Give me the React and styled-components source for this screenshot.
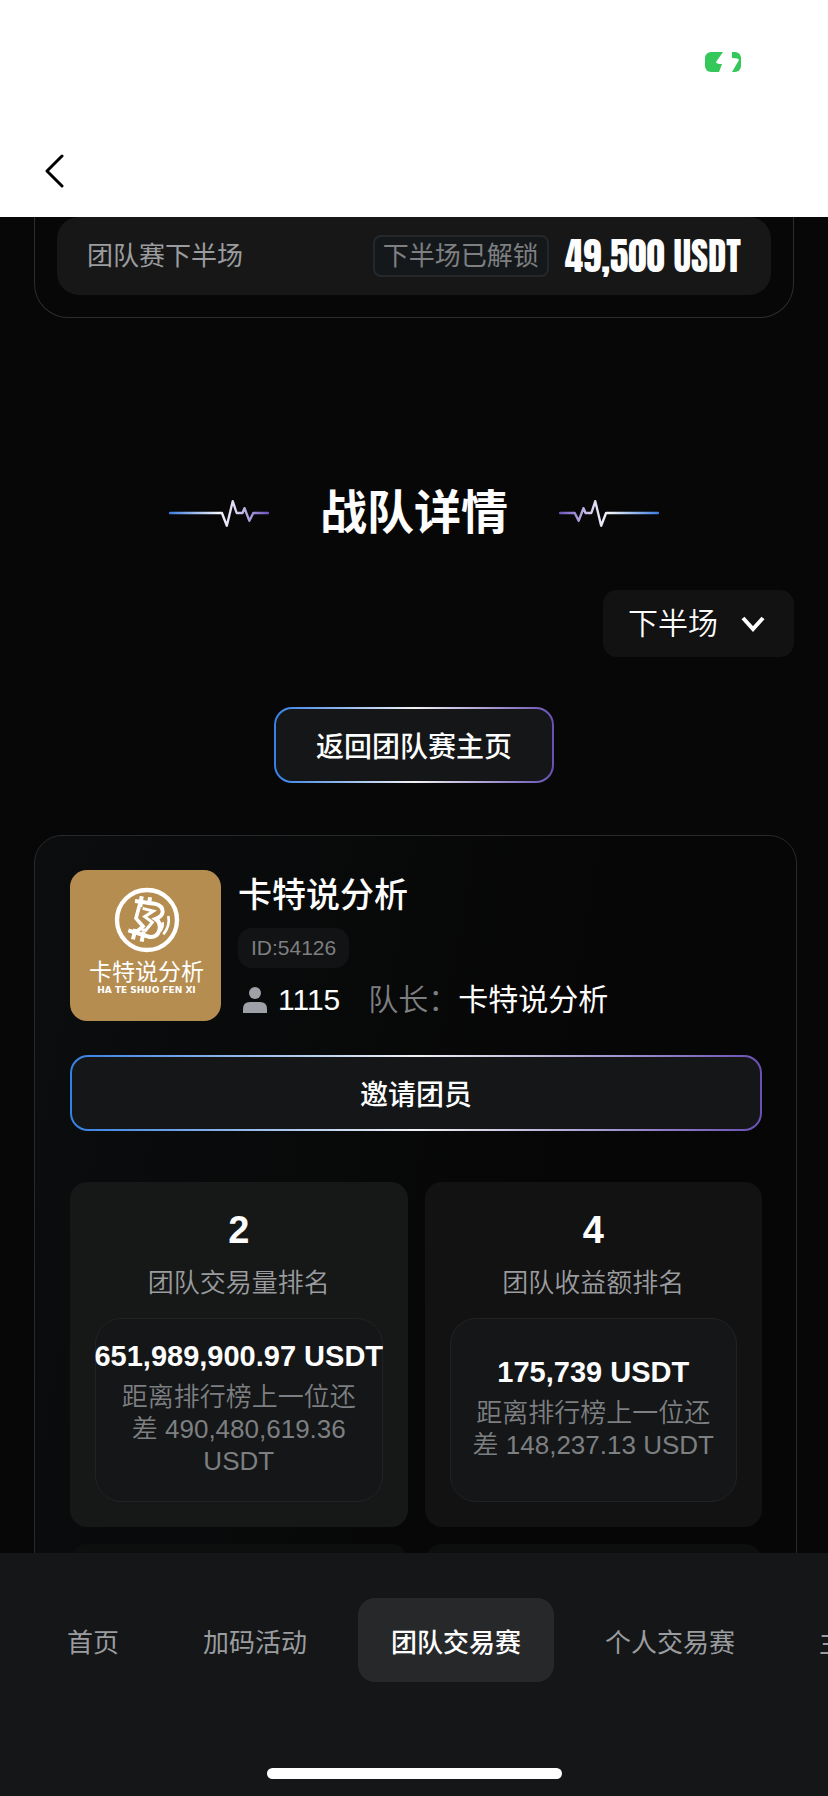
import React, { useState } from 'react';
import styled, { createGlobalStyle } from 'styled-components';

const colors = {
   page: '#070707',
   panel: '#141618',
   line: '#27292a',
   white: '#fdfdfd',
   muted: '#9a9c9f',
   dim: '#7d7f81',
   gold: '#b68d50',
};

const tabs = ['首页', '加码活动', '团队交易赛', '个人交易赛', '主播赛'];

const stats = [
   { rank: '2', label: '团队交易量排名', amount: '651,989,900.97 USDT', gap: '490,480,619.36 USDT', bg: '#161717' },
   { rank: '4', label: '团队收益额排名', amount: '175,739 USDT', gap: '148,237.13 USDT', bg: '#121212' },
];

const Pulse = ({ id, flip }) => (
   <PulseSvg viewBox="0 0 102 28" $flip={flip} aria-hidden="true">
      <defs>
         <linearGradient id={id} gradientUnits="userSpaceOnUse" x1="0" y1="0" x2="102" y2="0">
            <stop offset="0" stopColor="#3a7be0" />
            <stop offset="0.5" stopColor="#f4f6fa" />
            <stop offset="0.65" stopColor="#e0d8f4" />
            <stop offset="1" stopColor="#6a50bd" />
         </linearGradient>
      </defs>
      <path
         d="M1 14H54L59 27L65 2L69 14H75L77 9L82 22L86 14H101"
         fill="none"
         stroke={`url(#${id})`}
         strokeWidth="2.4"
         strokeLinecap="round"
         strokeLinejoin="round"
      />
   </PulseSvg>
);

const CoinMark = () => (
   <svg width="66" height="66" viewBox="104 52 198 198" fill="none" stroke="#fff" aria-hidden="true">
      <circle cx="203" cy="151" r="90" strokeWidth="13" />
      <path
         d="M167 94L226 102Q251 108 250 127Q248 141 229 148Q246 159 240 182Q233 204 211 202L147 182"
         strokeWidth="12"
      />
      <path d="M187 80L183 112M212 83L209 106M168 178L161 209M193 186L187 216" strokeWidth="12" />
      <path d="M183 98L170 146L191 170L171 187" strokeWidth="11" />
      <path d="M190 116L222 124L196 141L219 158L199 182L187 180" strokeWidth="9" />
      <path d="M250 158Q252 170 243 184M267 139Q273 168 252 194" strokeWidth="8" />
   </svg>
);

export default function App() {
   const [half, setHalf] = useState('second');
   const [active, setActive] = useState('团队交易赛');

   return (
      <Screen>
         <GlobalStyle />
         <Header>
            <StatusBar>
               <svg width="36" height="20" viewBox="0 0 36 20" aria-hidden="true">
                  <rect width="36" height="20" rx="6" fill="#34c759" />
                  <path d="M18 0L11 10Q11 12 17 12L14 20H27L34 8Q34 6 27 6V0Z" fill="#fff" />
               </svg>
            </StatusBar>
            <BackButton type="button" aria-label="返回">
               <svg width="20" height="34" viewBox="0 0 20 34" fill="none" aria-hidden="true">
                  <path d="M18 2L3 17L18 32" stroke="#000" strokeWidth="3" strokeLinecap="round" strokeLinejoin="round" />
               </svg>
            </BackButton>
         </Header>

         <Main>
            <PrizeCard>
               <PrizeRow>
                  <PrizeName>团队赛下半场</PrizeName>
                  <UnlockTag>下半场已解锁</UnlockTag>
                  <PrizeAmount>49,500 USDT</PrizeAmount>
               </PrizeRow>
            </PrizeCard>

            <TitleRow>
               <Pulse id="pulse-left" />
               <Title>战队详情</Title>
               <Pulse id="pulse-right" flip />
            </TitleRow>

            <HalfPicker>
               <HalfSelect aria-label="赛段" value={half} onChange={(e) => setHalf(e.target.value)}>
                  <option value="first">上半场</option>
                  <option value="second">下半场</option>
               </HalfSelect>
               <Chevron viewBox="0 0 24 16" aria-hidden="true">
                  <path d="M2 2L12 13L22 2" fill="none" stroke="#fff" strokeWidth="4" />
               </Chevron>
            </HalfPicker>

            <BackHome type="button">返回团队赛主页</BackHome>

            <TeamCard>
               <TeamHead>
                  <Avatar>
                     <CoinMark />
                     <AvatarName>卡特说分析</AvatarName>
                     <AvatarLatin>HA TE SHUO FEN XI</AvatarLatin>
                  </Avatar>
                  <TeamInfo>
                     <TeamName>卡特说分析</TeamName>
                     <TeamId>ID:54126</TeamId>
                     <TeamMeta>
                        <svg width="26" height="26" viewBox="0 0 26 26" fill="#9fa1a8" aria-hidden="true">
                           <circle cx="13" cy="6" r="6" />
                           <path d="M1 26V22Q1 15 8 15H18Q25 15 25 22V26Z" />
                        </svg>
                        <Count>1115</Count>
                        <Leader>
                           <span>队长：</span>卡特说分析
                        </Leader>
                     </TeamMeta>
                  </TeamInfo>
               </TeamHead>

               <InviteButton type="button">邀请团员</InviteButton>

               <Stats>
                  {stats.map((item) => (
                     <StatCard key={item.label} $bg={item.bg}>
                        <Rank>{item.rank}</Rank>
                        <StatLabel>{item.label}</StatLabel>
                        <StatBox>
                           <Amount>{item.amount}</Amount>
                           <Behind>距离排行榜上一位还差 {item.gap}</Behind>
                        </StatBox>
                     </StatCard>
                  ))}
                  <StatCard $bg="#0d0e0e" />
                  <StatCard $bg="#0d0e0e" />
               </Stats>
            </TeamCard>
         </Main>

         <Footer>
            <TabList>
               {tabs.map((tab) => (
                  <Tab key={tab} type="button" $active={tab === active} onClick={() => setActive(tab)}>
                     {tab}
                  </Tab>
               ))}
            </TabList>
            <HomeBar />
         </Footer>
      </Screen>
   );
}

const GlobalStyle = createGlobalStyle`
   * {
      box-sizing: border-box;
   }

   body {
      margin: 0;
      background: ${colors.page};
      color: ${colors.white};
      font-family: 'Liberation Sans', 'Noto Sans CJK SC', sans-serif;
      font-size: 26px;
   }

   button,
   select {
      font-family: inherit;
      color: inherit;
      border: 0;
      cursor: pointer;
   }

   h1,
   h2,
   p {
      margin: 0;
   }
`;

const Screen = styled.div`
   display: flex;
   flex-direction: column;
   height: 100vh;
   overflow: hidden;
`;

const Header = styled.header`
   flex: none;
   height: 217px;
   background: #fff;
`;

const StatusBar = styled.div`
   display: flex;
   justify-content: flex-end;
   padding: 52px 87px 0 0;
   height: 124px;
`;

const BackButton = styled.button`
   display: flex;
   margin-left: 34px;
   padding: 30px 10px;
   background: none;
`;

const Main = styled.main`
   flex: 1;
   min-height: 0;
   overflow: hidden;
   display: flex;
   flex-direction: column;
   padding: 0 34px;
`;

const PrizeCard = styled.section`
   flex: none;
   padding: 0 22px 22px;
   border: 1px solid #2d2d2d;
   border-top: 0;
   border-radius: 0 0 34px 34px;
`;

const PrizeRow = styled.div`
   display: flex;
   align-items: center;
   height: 78px;
   padding: 0 30px;
   border-radius: 22px;
   background: #171717;
`;

const PrizeName = styled.span`
   flex: 1;
   color: ${colors.muted};
   line-height: 38px;
`;

const UnlockTag = styled.span`
   margin-right: 16px;
   padding: 0 8px;
   border: 2px solid #25282a;
   border-radius: 8px;
   background: #15181a;
   color: ${colors.dim};
   line-height: 38px;
`;

const PrizeAmount = styled.span`
   font-family: 'Anton', 'Liberation Sans Narrow', 'Liberation Sans', sans-serif;
   font-size: 37px;
   white-space: nowrap;
`;

const TitleRow = styled.div`
   flex: none;
   display: flex;
   align-items: center;
   justify-content: center;
   gap: 51px;
   margin-top: 162px;
`;

const Title = styled.h1`
   font-size: 47px;
   line-height: 66px;
   font-weight: 700;
`;

const PulseSvg = styled.svg`
   width: 100px;
   height: 28px;
   transform: ${({ $flip }) => ($flip ? 'scaleX(-1)' : 'none')};
`;

const HalfPicker = styled.div`
   flex: none;
   display: grid;
   align-items: center;
   align-self: flex-end;
   margin-top: 44px;
`;

const HalfSelect = styled.select`
   grid-area: 1 / 1;
   width: 191px;
   height: 67px;
   padding: 0 60px 0 25px;
   border-radius: 14px;
   appearance: none;
   background: #121212;
   font-size: 30px;
   font-weight: 350;
`;

const Chevron = styled.svg`
   grid-area: 1 / 1;
   justify-self: end;
   width: 24px;
   height: 16px;
   margin-right: 29px;
   pointer-events: none;
`;

const GlowButton = styled.button`
   flex: none;
   height: 76px;
   border: 2px solid transparent;
   border-radius: 18px;
   background: linear-gradient(${colors.panel}, ${colors.panel}) padding-box,
      linear-gradient(90deg, #3580e4, #f2f2f4 50%, #6850b4) border-box;
   font-size: 28px;
   font-weight: 500;
`;

const BackHome = styled(GlowButton)`
   align-self: center;
   margin: 50px 0 52px;
   padding: 0 40px;
`;

const TeamCard = styled.section`
   flex: none;
   margin-right: -3px;
   padding: 34px 34px 0 35px;
   border: 1px solid ${colors.line};
   border-radius: 28px;
   background: linear-gradient(100deg, #0b0d0e, #060606 65%);
`;

const TeamHead = styled.div`
   display: flex;
   gap: 17px;
`;

const Avatar = styled.div`
   display: flex;
   flex-direction: column;
   align-items: center;
   width: 151px;
   height: 151px;
   padding: 17px 0 0 2px;
   border-radius: 17px;
   background: ${colors.gold};
   color: #fff;
`;

const AvatarName = styled.span`
   margin-top: 5px;
   font-size: 23px;
   line-height: 28px;
`;

const AvatarLatin = styled.span`
   font-family: 'DejaVu Sans', sans-serif;
   font-size: 9px;
   font-weight: 700;
   line-height: 8px;
   white-space: nowrap;
`;

const TeamInfo = styled.div`
   display: flex;
   flex-direction: column;
   align-items: flex-start;
`;

const TeamName = styled.h2`
   font-size: 34px;
   line-height: 50px;
   font-weight: 500;
`;

const TeamId = styled.span`
   margin: 8px 0 12px;
   padding: 0 13px;
   border-radius: 14px;
   background: #121314;
   color: ${colors.dim};
   font-size: 21px;
   line-height: 40px;
`;

const TeamMeta = styled.div`
   display: flex;
   align-items: center;
   padding-left: 4px;
   font-size: 30px;
   line-height: 40px;
`;

const Count = styled.span`
   margin: 0 28px 0 10px;
`;

const Leader = styled.span`
   span {
      color: ${colors.dim};
      font-weight: 350;
   }
`;

const InviteButton = styled(GlowButton)`
   width: 100%;
   margin: 34px 0 51px;
`;

const Stats = styled.div`
   display: grid;
   grid-template-columns: 1fr 1fr;
   gap: 17px;
`;

const StatCard = styled.article`
   display: flex;
   flex-direction: column;
   align-items: center;
   min-width: 0;
   padding: 24px 25px 25px;
   border-radius: 17px;
   background: ${({ $bg }) => $bg};
`;

const Rank = styled.strong`
   font-size: 38px;
   line-height: 48px;
`;

const StatLabel = styled.span`
   margin: 12px 0 18px;
   color: ${colors.muted};
   line-height: 34px;
   font-weight: 350;
`;

const StatBox = styled.div`
   display: flex;
   flex-direction: column;
   align-items: center;
   justify-content: center;
   width: 100%;
   min-height: 184px;
   padding: 14px 20px 22px;
   border: 1px solid #202223;
   border-radius: 26px;
   background: ${colors.panel};
`;

const Amount = styled.strong`
   margin-bottom: 5px;
   font-size: 29px;
   line-height: 40px;
   white-space: nowrap;
`;

const Behind = styled.p`
   color: ${colors.dim};
   line-height: 32px;
   font-weight: 350;
   text-align: center;
`;

const Footer = styled.footer`
   flex: none;
   display: flex;
   flex-direction: column;
   align-items: center;
   padding: 45px 0 17px;
   background: ${colors.panel};
`;

const TabList = styled.nav`
   display: flex;
   gap: 18px;
   width: 100%;
   padding-left: 34px;
   overflow: hidden;
`;

const Tab = styled.button`
   flex: none;
   height: 84px;
   padding: 0 33px;
   border-radius: 17px;
   background: ${({ $active }) => ($active ? '#27282a' : 'transparent')};
   color: ${({ $active }) => ($active ? colors.white : colors.muted)};
   font-size: 26px;
   font-weight: ${({ $active }) => ($active ? 500 : 400)};
`;

const HomeBar = styled.div`
   width: 295px;
   height: 11px;
   margin-top: 86px;
   border-radius: 6px;
   background: #fff;
`;
